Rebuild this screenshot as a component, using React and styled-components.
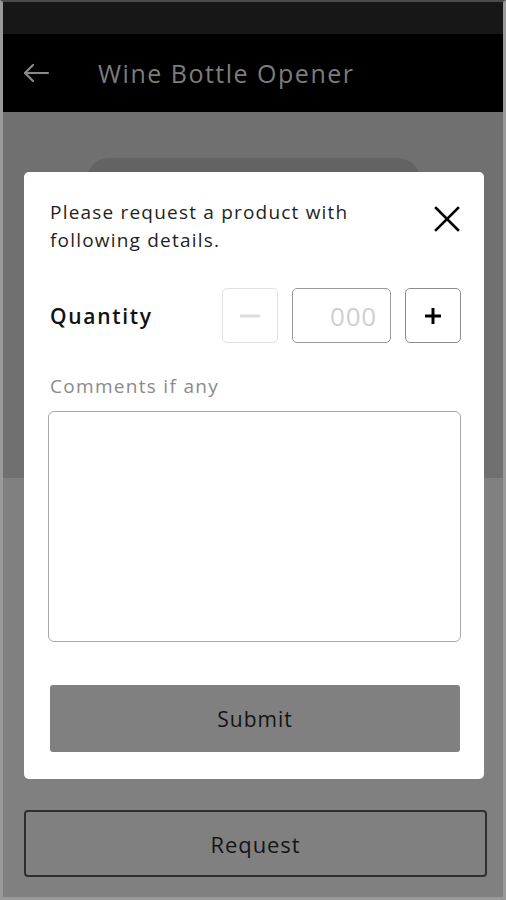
import React, { useState } from 'react'
import styled, { createGlobalStyle } from 'styled-components'

const GlobalStyle = createGlobalStyle`
  html, body {
    margin: 0;
    padding: 0;
    background: #9a9a9a;
  }
  * {
    box-sizing: border-box;
  }
  body {
    font-family: 'Open Sans', 'Noto Sans', sans-serif;
  }
`

const App = () => {
  const [qty, setQty] = useState('')
  const [comment, setComment] = useState('')

  const renderHeader = () => (
    <>
      <StatusBar />
      <Header>
        <BackButton aria-label="back">
          <svg width="28" height="20" viewBox="0 0 28 20" fill="none" stroke="#8a8a8a" strokeWidth="2.2" strokeLinecap="round" strokeLinejoin="round">
            <path d="M26 10H3" />
            <path d="M11 2L3 10l8 8" />
          </svg>
        </BackButton>
        <Title>Wine Bottle Opener</Title>
      </Header>
    </>
  )

  const renderModal = () => (
    <Modal>
      <ModalTop>
        <Intro>Please request a product with following details.</Intro>
        <CloseButton aria-label="close">
          <svg width="26" height="26" viewBox="0 0 26 26" stroke="#000" strokeWidth="2.6" strokeLinecap="square">
            <path d="M2 2l22 22M24 2L2 24" />
          </svg>
        </CloseButton>
      </ModalTop>
      <QtyRow>
        <QtyLabel>Quantity</QtyLabel>
        <Stepper>
          <StepButton disabled>
            <svg width="20" height="4" viewBox="0 0 20 4"><rect width="20" height="3" y="0.5" fill="#ddd" /></svg>
          </StepButton>
          <QtyInput placeholder="000" value={qty} onChange={e => setQty(e.target.value)} />
          <StepButton>
            <svg width="18" height="18" viewBox="0 0 18 18"><path d="M9 1v16M1 9h16" stroke="#000" strokeWidth="3" /></svg>
          </StepButton>
        </Stepper>
      </QtyRow>
      <CommentLabel>Comments if any</CommentLabel>
      <CommentBox value={comment} onChange={e => setComment(e.target.value)} />
      <SubmitButton>Submit</SubmitButton>
    </Modal>
  )

  return (
    <Frame>
      <GlobalStyle />
      {renderHeader()}
      <Content>
        <Hero>
          <HeroCard />
        </Hero>
        <Footer>
          <RequestButton>Request</RequestButton>
        </Footer>
      </Content>
      {renderModal()}
    </Frame>
  )
}

const Frame = styled.div`
  position: relative;
  height: 900px;
  display: flex;
  flex-direction: column;
  border: 3px solid #9a9a9a;
  border-top: 2px solid #4a4a4a;
  overflow: hidden;
`
const StatusBar = styled.div`
  height: 32px;
  background: #171717;
`
const Header = styled.header`
  height: 78px;
  background: #000;
  display: flex;
  align-items: center;
  padding-left: 19px;
`
const BackButton = styled.button`
  background: none;
  border: none;
  padding: 0;
  display: flex;
  margin-right: 48px;
`
const Title = styled.h1`
  margin: 0;
  font-size: 25px;
  font-weight: 500;
  color: #7c7c7c;
  letter-spacing: 1.5px;
`
const Content = styled.main`
  flex: 1;
  display: flex;
  flex-direction: column;
`
const Hero = styled.section`
  height: 366px;
  background: #707070;
  padding: 46px 83px 0 84px;
  display: flex;
`
const HeroCard = styled.div`
  flex: 1;
  background: #636363;
  border-radius: 22px 22px 0 0;
`
const Footer = styled.section`
  flex: 1;
  background: #808080;
  padding: 332px 16px 0 21px;
`
const RequestButton = styled.button`
  width: 100%;
  height: 67px;
  background: transparent;
  border: 2px solid #2e2e2e;
  border-radius: 4px;
  font-family: inherit;
  font-size: 22px;
  font-weight: 500;
  letter-spacing: 0.9px;
  color: #151515;
`
const Modal = styled.div`
  position: absolute;
  left: 21px;
  top: 170px;
  width: 460px;
  height: 607px;
  background: #fff;
  border-radius: 5px;
  padding: 26px 23px 0 26px;
  display: flex;
  flex-direction: column;
`
const ModalTop = styled.div`
  display: flex;
  justify-content: space-between;
  align-items: flex-start;
`
const Intro = styled.p`
  margin: 0;
  max-width: 340px;
  font-size: 19px;
  line-height: 28px;
  letter-spacing: 1.2px;
  color: #1f1f1f;
`
const CloseButton = styled.button`
  background: none;
  border: none;
  padding: 0;
  margin: 8px 1px 0 0;
  display: flex;
`
const QtyRow = styled.div`
  display: flex;
  justify-content: space-between;
  align-items: center;
  margin-top: 34px;
`
const QtyLabel = styled.span`
  font-size: 21px;
  font-weight: 600;
  letter-spacing: 1.7px;
  color: #111;
`
const Stepper = styled.div`
  display: flex;
  gap: 14px;
`
const StepButton = styled.button`
  width: 56px;
  height: 55px;
  background: #fff;
  border: 1.5px solid ${props => (props.disabled ? '#e2e2e2' : '#8c8c8c')};
  border-radius: 5px;
  display: flex;
  align-items: center;
  justify-content: center;
  padding: 0;
`
const QtyInput = styled.input`
  width: 99px;
  height: 55px;
  border: 1.5px solid #9a9a9a;
  border-radius: 5px;
  padding: 0 13px 0 0;
  text-align: right;
  font-family: inherit;
  font-size: 26px;
  letter-spacing: 0.8px;
  color: #222;
  &::placeholder {
    color: #cfcfcf;
  }
`
const CommentLabel = styled.label`
  margin-top: 30px;
  font-size: 19px;
  letter-spacing: 1.3px;
  color: #8a8a8a;
`
const CommentBox = styled.textarea`
  margin-top: 12px;
  height: 231px;
  width: 413px;
  margin-left: -2px;
  border: 1.5px solid #a8a8a8;
  border-radius: 6px;
  resize: none;
  font-family: inherit;
  font-size: 18px;
`
const SubmitButton = styled.button`
  margin-top: 43px;
  height: 67px;
  width: 410px;
  background: #808080;
  border: none;
  border-radius: 3px;
  font-family: inherit;
  font-size: 21px;
  font-weight: 500;
  letter-spacing: 1px;
  color: #141414;
`

export default App
